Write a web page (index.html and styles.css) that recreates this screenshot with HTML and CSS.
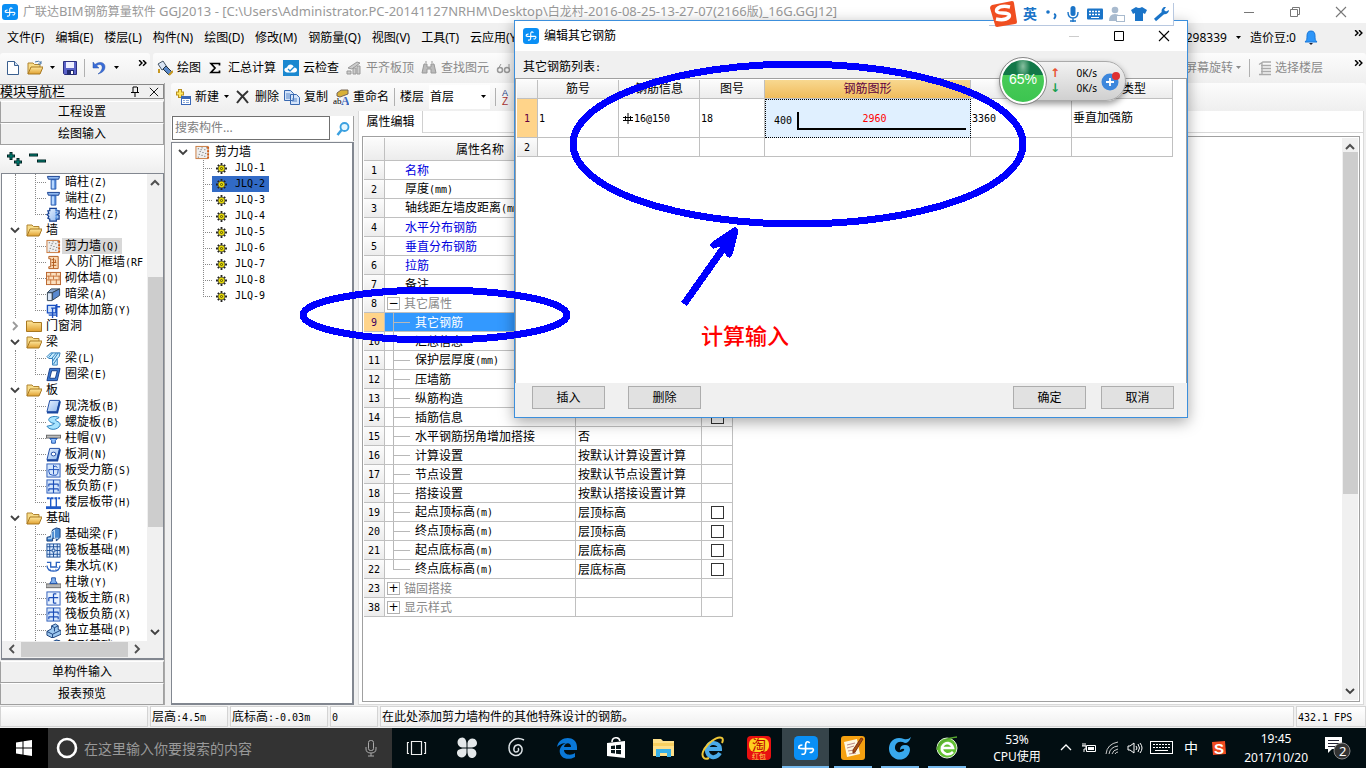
FILE: index.html
```html
<!DOCTYPE html>
<html lang="zh-CN">
<head>
<meta charset="utf-8">
<title>广联达BIM钢筋算量软件 GGJ2013</title>
<link rel="stylesheet" href="styles.css">
</head>
<body>
<svg class="defs" aria-hidden="true">
  <linearGradient id="gb" x1="0" y1="0" x2="1" y2="1"><stop offset="0" stop-color="#e8f2ff"/><stop offset="1" stop-color="#8fb8ee"/></linearGradient>
  <linearGradient id="gy" x1="0" y1="0" x2="0" y2="1"><stop offset="0" stop-color="#ffe9a0"/><stop offset="1" stop-color="#e0a030"/></linearGradient>
  <symbol id="app" viewBox="0 0 16 16"><rect width="16" height="16" rx="3" fill="#0a8ff5"/><path d="M10.500 4.600Q7.900 2.600 7.700 6v4.200q-.2 2.500-2.700 1.800M5.600 6Q3 6 3.200 8q1 .6 4.500.4h4.600q1.400.6-.2 2.300-.9.600-1.600 0" fill="none" stroke="#fff" stroke-width="1.100"/></symbol>
  <symbol id="col" viewBox="0 0 16 16"><path d="M1.500 1.500h13l-1 3h-11z" fill="#8fb8f0" stroke="#123c8c"/><path d="M5.500 5h5v10h-5z" fill="#b8d8ff" stroke="#1a4ea8"/><path d="M9 5h1v10H9z" fill="#2a68c8"/></symbol>
  <symbol id="gzz" viewBox="0 0 16 16"><path d="M4 4V1.500h7V4h3v3l-2 1 2 1v4h-3v2H4v-2l-2-1 1-2-2-2 2-1-1-3z" fill="url(#gb)" stroke="#153f90" stroke-width="1.300"/><path d="M11 2v12" stroke="#4f8ee0" stroke-width="2" stroke-dasharray="2 1"/></symbol>
  <symbol id="fo" viewBox="0 0 16 16"><path d="M1 14V3h5l1.500 1.500H13V7" fill="#f8dc88" stroke="#b08430"/><path d="M1 14 4 7h12l-3 7z" fill="url(#gy)" stroke="#a87820"/></symbol>
  <symbol id="fc" viewBox="0 0 16 16"><path d="M.5 13.500V3h5.500l1 1.500h8.500v9z" fill="url(#gy)" stroke="#a87820"/></symbol>
  <symbol id="wall" viewBox="0 0 16 16"><rect x="1" y="1.500" width="13" height="13" fill="#eee" stroke="#c8783c"/><path d="M14 2v12" stroke="#d05a14" stroke-width="2" stroke-dasharray="2 1.500"/><path d="M3 4h1M7 3h1M10 5h1M5 7h1M8 8h1M4 10h1M11 9h1M7 11h1M10 12h1M3 13h1M6 5h1M12 3h1" stroke="#555"/></symbol>
  <symbol id="door" viewBox="0 0 16 16"><path d="M3 1.500h10v13H3v-2h2V4H3z" fill="#fbd9b4" stroke="#b05a1c"/><path d="M6 5h3M8 3v11M6 8h5M6 11h5M10 5v3" stroke="#b05a1c"/></symbol>
  <symbol id="brick" viewBox="0 0 16 16"><rect x=".5" y="1.500" width="15" height="13" fill="#fbe0c0" stroke="#b8622a"/><path d="M1 5.500h14M1 9.500h14M5 2v3M11 2v3M8 5v4M14 5v4M3 5v4M5 9v5M11 9v5" stroke="#c8743c"/></symbol>
  <symbol id="beam" viewBox="0 0 16 16"><path d="M1.500 6h5v8.500h-5z" fill="#dce8f8" stroke="#345"/><path d="m1.500 6 4-4h9l-8 4z" fill="#89a8d0" stroke="#345"/><path d="m7 6 7.500-4v7L7 14z" fill="#5a8ad0" stroke="#345"/></symbol>
  <symbol id="rwall" viewBox="0 0 16 16"><rect x="2" y="2" width="10" height="11" fill="#cfe2fb"/><path d="M1.500 2.500h9v8h-9zM5.500 5.500h6v5M7 6v10M11.500 1v14M11 4h4M3 13h8" fill="none" stroke="#1a4fc0" stroke-width="1.400"/></symbol>
  <symbol id="liang" viewBox="0 0 16 16"><path d="m1 6 4-4h10l-1 4-2 2v7H7V8H3z" fill="#c6ecff" stroke="#2a7ab8"/><path d="m3 7 4-5m-1 6 5-6m-4 9 6-9M8 14l4-6" stroke="#2a7ab8"/></symbol>
  <symbol id="ring" viewBox="0 0 16 16"><path d="M4 1.500h11l-3 13H1z" fill="#3a78d0" stroke="#163c88"/><path d="M6 4h6l-2 8H4z" fill="#fff" stroke="#163c88"/></symbol>
  <symbol id="slab" viewBox="0 0 16 16"><path d="M4 1.500h10.500l-3 12H1z" fill="url(#gb)" stroke="#1a48a0"/><path d="M1 14.500h11l3-12" fill="none" stroke="#1a48a0" stroke-width="2"/></symbol>
  <symbol id="spiral" viewBox="0 0 16 16"><path d="M14 2.500C8 0 0 3 4 7q2 2 5 2-1 2-8 3c3 5 12 4 14-1 1-4-5-4-5-6 1-1 3-1 4-2.500z" fill="#a8e4ff" stroke="#1f78b8"/></symbol>
  <symbol id="cap" viewBox="0 0 16 16"><rect x=".5" y="4.500" width="15" height="3" fill="#bbb" stroke="#666"/><path d="M4 8h8l-2 2v3H6v-3z" fill="#8fc0ff" stroke="#1b50a8"/></symbol>
  <symbol id="hole" viewBox="0 0 16 16"><use href="#slab"/><ellipse cx="8" cy="7.500" rx="2.500" ry="2" fill="#fff" stroke="#1a48a0"/></symbol>
  <symbol id="rb1" viewBox="0 0 16 16"><rect x="1" y="1" width="14" height="14" fill="#d4e6fc" stroke="#2a5ab8"/><path d="M8 2v10M3 7h11M3 7v2q0 4 4 4h4q2-1 2-6M8 4q3-2 4 1" fill="none" stroke="#1b4eb8"/></symbol>
  <symbol id="rb2" viewBox="0 0 16 16"><rect x="1" y="1" width="14" height="14" fill="#d4e6fc" stroke="#2a5ab8"/><path d="M8 1v14M3 5.500h10M3 10.500h10M3 5v3M13 5v3M3 10v3M13 10v3" stroke="#1b4eb8" stroke-width="1.200"/></symbol>
  <symbol id="strip" viewBox="0 0 16 16"><path d="M1 3.500h14" stroke="#1f5ac8" stroke-width="2" stroke-dasharray="3 1"/><path d="M5 3v11M11 3v11" stroke="#1f5ac8" stroke-width="1.500"/><path d="M0 12h16v3H0z" fill="#1f5ac8"/></symbol>
  <symbol id="fbeam" viewBox="0 0 16 16"><path d="M1 15v-4l4-1 2-7 4-2 4 1v9l-4 4v-3H7v3z" fill="#4a8ad0" stroke="#143c78"/><path d="M2 12h4V6l3-3v9h4" fill="none" stroke="#d8ecff"/></symbol>
  <symbol id="raft" viewBox="0 0 16 16"><rect x="1" y="1" width="14" height="14" fill="#dcecff" stroke="#1a4e98"/><path d="M4 1v14M12 1v14M1 4h14M1 12h14M6.500 6.500h3v3h-3zM8 1v5M8 10v5M1 8h5M10 8h5" fill="none" stroke="#1a4e98"/></symbol>
  <symbol id="pit" viewBox="0 0 16 16"><path d="M1 3.500h4v5h6v-5h4M1 7c1 8 13 8 14 0" fill="none" stroke="#2a62c0" stroke-width="1.400"/><path d="M4 11h1M7 12h1M10 11h1M12 9h1" stroke="#2a62c0"/></symbol>
  <symbol id="pier" viewBox="0 0 16 16"><path d="M0 9.500h16v4H0z" fill="#b8b8b8" stroke="#666"/><path d="M6 3h4v3l2 3H4l2-3z" fill="#86b4f0" stroke="#1a4ea8"/></symbol>
  <symbol id="rt1" viewBox="0 0 16 16"><rect x="1" y="1" width="14" height="14" fill="#e8f2ff" stroke="#2a5ab8"/><path d="M8 3v10M3 7h10M3 7v4M8 3h3M8 13h3" fill="none" stroke="#1b4eb8" stroke-width="1.300"/></symbol>
  <symbol id="indep" viewBox="0 0 16 16"><path d="m1 9 5-3V3l4-2 3 2v4l3 1v4l-9 4-6-3z" fill="#9cc8f0" stroke="#153c78"/><path d="m1 9 6 3 8-4M7 12v4M6 3l3 2v4M9 5l4-2" fill="none" stroke="#153c78"/></symbol>
  <symbol id="gear" viewBox="0 0 12 12"><path d="M6 0v12M0 6h12M2 2l8 8M10 2l-8 8" stroke="#222" stroke-width="2"/><circle cx="6" cy="6" r="3.600" fill="#f2e400" stroke="#554" stroke-width=".8"/><circle cx="6" cy="6" r="1.200" fill="#f2e400" stroke="#222" stroke-width=".8"/></symbol>
  <symbol id="dn" viewBox="0 0 10 10"><path d="m1 3 4 4 4-4" fill="none" stroke="#404040" stroke-width="1.800"/></symbol>
  <symbol id="up" viewBox="0 0 10 10"><path d="m1 7 4-4 4 4" fill="none" stroke="#505050" stroke-width="2"/></symbol>
  <symbol id="rt" viewBox="0 0 10 10"><path d="m3 1 4 4-4 4" fill="none" stroke="currentColor" stroke-width="1.800"/></symbol>
  <symbol id="lt" viewBox="0 0 10 10"><path d="M7 1 3 5l4 4" fill="none" stroke="currentColor" stroke-width="1.800"/></symbol>
  <symbol id="tri" viewBox="0 0 7 4"><path d="M1 0h5L3.500 3z" fill="currentColor"/></symbol>
  <symbol id="more" viewBox="0 0 8 6"><path d="m1 0 2.500 2.500L1 5m3.500-5L7 2.500 4.500 5" fill="none" stroke="#000" stroke-width="1.300"/></symbol>
  <symbol id="x" viewBox="0 0 12 12"><path d="m1 1 10 10M11 1 1 11" stroke="currentColor" stroke-width="1.100"/></symbol>
</svg>

<div class="app">
  <header class="title">
    <svg class="i16"><use href="#app"/></svg>
    <h1>广联达<span>BIM</span>钢筋算量软件<span> GGJ2013 - [C:\Users\Administrator.PC-20141127NRHM\Desktop\</span>白龙村<span>-2016-08-25-13-27-07(2166</span>版<span>)_16G.GGJ12]</span></h1>
    <div class="winbtns">
      <button aria-label="最小化"><svg width="12" height="12"><path d="M1 6.500h10" stroke="#777"/></svg></button>
      <button aria-label="还原"><svg width="12" height="12"><path d="M1.500 3.500h7v7h-7zM3.500 3V1.500h7v7H9" fill="none" stroke="#777"/></svg></button>
      <button aria-label="关闭"><svg width="12" height="12"><use href="#x"/></svg></button>
    </div>
  </header>

  <nav class="menu">
    <a href="#">文件(F)</a><a href="#">编辑(E)</a><a href="#">楼层(L)</a><a href="#">构件(N)</a><a href="#">绘图(D)</a><a href="#">修改(M)</a><a href="#">钢筋量(Q)</a><a href="#">视图(V)</a><a href="#">工具(T)</a><a href="#">云应用(Y)</a>
    <div class="account"><span>13298339</span><svg class="tri"><use href="#tri"/></svg><span class="beans">造价豆:0</span>
      <svg width="14" height="16" viewBox="0 0 14 16"><path d="M7 1c3 0 4 2 4 5 0 3 0 4 2 6H1c2-2 2-3 2-6 0-3 1-5 4-5z" fill="#2e96f8" stroke="#1a78d8"/><path d="M5 13h4l-2 2z" fill="#223"/></svg>
      <svg class="more"><use href="#more"/></svg></div>
  </nav>

  <div class="bars">
    <div class="bar file">
      <button aria-label="新建"><svg class="i16"><path d="M2.500 1.500h7l4 4v9h-11z" fill="#fff" stroke="#3a5f8f"/><path d="M9.500 1.500v4h4" fill="#cfe0f4" stroke="#3a5f8f"/></svg></button>
      <button aria-label="打开"><svg class="i16"><use href="#fo"/><path d="M8 2q4-2 6 1m0-2v3h-3" fill="none" stroke="#4a78a8"/></svg></button>
      <svg class="tri"><use href="#tri"/></svg>
      <button aria-label="保存"><svg class="i16"><path d="M1.500 1.500h13v13h-12l-1-1z" fill="#5a62c8" stroke="#2c2f80"/><path d="M4 2h8v6H4z" fill="#eef"/><path d="M5 10h7v5H5z" fill="#222c70"/><path d="M9 11h2v3H9z" fill="#fff"/></svg></button>
      <i class="sep"></i>
      <button aria-label="撤销"><svg class="i16"><path d="M2 2v6h6L5.500 5.800C9 3 12 5 11 9q-1 3-4 5 7-2 7-7c0-5-6-6-10-2.500z" fill="#3a6cd8" stroke="#2450a8" stroke-width=".5"/></svg></button>
      <svg class="tri"><use href="#tri"/></svg>
      <svg class="more"><use href="#more"/></svg>
    </div>
    <div class="bar main">
      <button><svg class="i16"><path d="m1 4 5-3 4 6-5 3z" fill="#d8e4f4" stroke="#456"/><path d="m6 9 3-3 6 6-3 3z" fill="#5a88c8" stroke="#234"/><path d="M2 9v4M12 15l4-4" stroke="#c89820" stroke-width="2"/></svg>绘图</button>
      <button><svg class="i16" viewBox="0 -2 16 16"><path d="M11.500 3.500V1.500H3L7 6l-4 4.500h8.500v-2" fill="none" stroke="#000" stroke-width="1.700"/></svg>汇总计算</button>
      <button><svg class="i16"><rect width="16" height="16" fill="#1a88d0"/><path d="M4 12.500c-4-1-3-5 0-5 1-4 6-4 7 0 4 0 4 5 0 5z" fill="#fff"/><path d="m5 9 2 2 4-4" fill="none" stroke="#1a88d0" stroke-width="1.300"/></svg>云检查</button>
      <button class="off"><svg class="i16"><path d="m2 8 9-6 3 1-8 6zM1 11h4v3H1zM7 8h3v6H7zM11 6h3v8h-3z" fill="#ccc" stroke="#999"/></svg>平齐板顶</button>
      <button class="off"><svg class="i16"><path d="M3 4h3v3h4V4h3l2 9h-5V9H6v4H1zM4 2h2M10 2h2" fill="#bbb" stroke="#999"/></svg>查找图元</button>
      <button class="off" aria-label="查看"><svg class="i16"><circle cx="4" cy="10" r="2.500" fill="none" stroke="#999" stroke-width="1.500"/><circle cx="11" cy="10" r="2.500" fill="none" stroke="#999" stroke-width="1.500"/><path d="M2 9 5 4m8 5V4" stroke="#999"/></svg></button>
      <div class="right">
        <button class="off">屏幕旋转<svg class="tri"><use href="#tri"/></svg></button><i class="sep"></i>
        <button class="off"><svg class="i16"><path d="M2 4.500 6 2h8M4 5.500h10M4 8.500h10M4 11.500h10M2 14.500h12M5 3v11" fill="none" stroke="#aaa" stroke-width="1.300"/></svg>选择楼层</button>
        <svg class="more"><use href="#more"/></svg>
      </div>
    </div>
  </div>

  <div class="work">
    <aside class="side">
      <div class="sidehead"><span>模块导航栏</span>
        <svg width="10" height="11"><path d="M3 1v5M7.500 1v5M3 1h4M1 6.500h8M5 7v4" stroke="#000" fill="none"/></svg><svg width="10" height="10" viewBox="0 0 12 12"><use href="#x"/></svg></div>
      <button class="sect">工程设置</button>
      <button class="sect">绘图输入</button>
      <div class="expand"><svg width="17" height="15"><path d="M1 5h8M5 1v8M8 11h8M12 7v8" stroke="#022" stroke-width="3"/><path d="M2 5h6M5 2v6M9 11h6M12 8v6" stroke="#009080"/></svg><svg width="17" height="15"><path d="M0 4h9M8 10h9" stroke="#022" stroke-width="3"/><path d="M1 4h7M9 10h7" stroke="#009080"/></svg></div>
      <div class="treebox">
        <div class="treeview">
          <ul class="tree">
            <li><ul class="kids">
              <li class="leaf"><svg class="i15"><use href="#col"/></svg><span>暗柱<b>(Z)</b></span></li>
              <li class="leaf"><svg class="i15"><use href="#col"/></svg><span>端柱<b>(Z)</b></span></li>
              <li class="leaf"><svg class="i15"><use href="#gzz"/></svg><span>构造柱<b>(Z)</b></span></li></ul></li>
            <li><div class="branch"><svg class="chev"><use href="#dn"/></svg><svg class="i16"><use href="#fo"/></svg>墙</div><ul class="kids">
              <li class="leaf sel"><svg class="i15"><use href="#wall"/></svg><span>剪力墙<b>(Q)</b></span></li>
              <li class="leaf"><svg class="i15"><use href="#door"/></svg><span>人防门框墙<b>(RF</b></span></li>
              <li class="leaf"><svg class="i15"><use href="#brick"/></svg><span>砌体墙<b>(Q)</b></span></li>
              <li class="leaf"><svg class="i15"><use href="#beam"/></svg><span>暗梁<b>(A)</b></span></li>
              <li class="leaf"><svg class="i15"><use href="#rwall"/></svg><span>砌体加筋<b>(Y)</b></span></li></ul></li>
            <li><div class="branch shut"><svg class="chev"><use href="#rt"/></svg><svg class="i16"><use href="#fc"/></svg>门窗洞</div></li>
            <li><div class="branch"><svg class="chev"><use href="#dn"/></svg><svg class="i16"><use href="#fo"/></svg>梁</div><ul class="kids">
              <li class="leaf"><svg class="i15"><use href="#liang"/></svg><span>梁<b>(L)</b></span></li>
              <li class="leaf"><svg class="i15"><use href="#ring"/></svg><span>圈梁<b>(E)</b></span></li></ul></li>
            <li><div class="branch"><svg class="chev"><use href="#dn"/></svg><svg class="i16"><use href="#fo"/></svg>板</div><ul class="kids">
              <li class="leaf"><svg class="i15"><use href="#slab"/></svg><span>现浇板<b>(B)</b></span></li>
              <li class="leaf"><svg class="i15"><use href="#spiral"/></svg><span>螺旋板<b>(B)</b></span></li>
              <li class="leaf"><svg class="i15"><use href="#cap"/></svg><span>柱帽<b>(V)</b></span></li>
              <li class="leaf"><svg class="i15"><use href="#hole"/></svg><span>板洞<b>(N)</b></span></li>
              <li class="leaf"><svg class="i15"><use href="#rb1"/></svg><span>板受力筋<b>(S)</b></span></li>
              <li class="leaf"><svg class="i15"><use href="#rb2"/></svg><span>板负筋<b>(F)</b></span></li>
              <li class="leaf"><svg class="i15"><use href="#strip"/></svg><span>楼层板带<b>(H)</b></span></li></ul></li>
            <li><div class="branch"><svg class="chev"><use href="#dn"/></svg><svg class="i16"><use href="#fo"/></svg>基础</div><ul class="kids">
              <li class="leaf"><svg class="i15"><use href="#fbeam"/></svg><span>基础梁<b>(F)</b></span></li>
              <li class="leaf"><svg class="i15"><use href="#raft"/></svg><span>筏板基础<b>(M)</b></span></li>
              <li class="leaf"><svg class="i15"><use href="#pit"/></svg><span>集水坑<b>(K)</b></span></li>
              <li class="leaf"><svg class="i15"><use href="#pier"/></svg><span>柱墩<b>(Y)</b></span></li>
              <li class="leaf"><svg class="i15"><use href="#rt1"/></svg><span>筏板主筋<b>(R)</b></span></li>
              <li class="leaf"><svg class="i15"><use href="#rb2"/></svg><span>筏板负筋<b>(X)</b></span></li>
              <li class="leaf"><svg class="i15"><use href="#indep"/></svg><span>独立基础<b>(P)</b></span></li>
              <li class="leaf"><svg class="i15"><use href="#fbeam"/></svg><span>条形基础<b>(T)</b></span></li>
              <li class="leaf"></li></ul></li>
          </ul>
          <div class="vsb"><svg><use href="#up"/></svg><div class="vtrack"><i class="navthumb"></i></div><svg><use href="#dn"/></svg></div>
        </div>
        <div class="hsb"><svg><use href="#lt"/></svg><i></i><svg><use href="#rt"/></svg></div>
      </div>
      <button class="sect">单构件输入</button>
      <button class="sect">报表预览</button>
    </aside>

    <main class="center">
      <div class="bar tools">
        <button><svg class="i16"><path d="M5 0v9M1 4.500h8" stroke="#b89020" stroke-width="4"/><path d="M5 1v7M2 4.500h6" stroke="#ffe860" stroke-width="2"/><rect x="6.500" y="7.500" width="9" height="8" fill="#fff" stroke="#3a68b8"/><path d="M6 9h10" stroke="#3a68b8" stroke-width="2"/><path d="M8 11.500h2m1 0h3m-6 2h2m1 0h3" stroke="#88a8d8"/></svg>新建<svg class="tri"><use href="#tri"/></svg></button>
        <button><svg class="i16"><path d="M2 2q6 5 11 12M13 2Q7 7 2 14" fill="none" stroke="#333" stroke-width="2"/></svg>删除</button>
        <button><svg class="i16"><path d="M.5 1.500h6l3 3v7h-9zM6.500 5.500h6l3 3v7h-9z" fill="#d4e4fa" stroke="#3868b0"/><path d="M2 5h4M2 7h4M2 9h4M8 10h5M8 12h5" stroke="#5a88c8"/></svg>复制</button>
        <button><svg class="i16"><path d="m4 4 4-3h7v4l-8 3-3-1z" fill="#d8b038" stroke="#765"/><text x="0" y="15" font-size="9" font-family="Liberation Serif">ab</text><text x="8" y="16" font-size="12" font-weight="bold" fill="#3a68c0" font-family="Liberation Serif">A</text></svg>重命名</button>
        <i class="sep"></i>
        <label for="floor">楼层</label>
        <div class="combo"><select id="floor"><option>首层</option></select><svg class="tri"><use href="#tri"/></svg></div>
        <i class="sep"></i>
        <svg width="10" height="18"><text x="1" y="8" font-size="9" fill="#248" font-family="Liberation Sans">A</text><text x="1" y="17" font-size="10" fill="#a33" font-family="Liberation Sans">Z</text></svg>
      </div>
      <div class="panes">
        <section class="comps">
          <div class="search"><input type="text" placeholder="搜索构件..." aria-label="搜索构件"><button aria-label="搜索"><svg class="i16"><circle cx="9.500" cy="6" r="4" fill="#e4f6ff" stroke="#3aa0e0" stroke-width="1.800"/><path d="m6.500 9-4 5" stroke="#3aa0e0" stroke-width="2.500"/></svg></button></div>
          <div class="complist">
            <div class="root"><svg class="chev"><use href="#dn"/></svg><svg class="i15"><use href="#wall"/></svg>剪力墙</div>
            <ul>
              <li><span><svg class="i11"><use href="#gear"/></svg><b>JLQ-1</b></span></li>
              <li class="on"><span><svg class="i11"><use href="#gear"/></svg><b>JLQ-2</b></span></li>
              <li><span><svg class="i11"><use href="#gear"/></svg><b>JLQ-3</b></span></li>
              <li><span><svg class="i11"><use href="#gear"/></svg><b>JLQ-4</b></span></li>
              <li><span><svg class="i11"><use href="#gear"/></svg><b>JLQ-5</b></span></li>
              <li><span><svg class="i11"><use href="#gear"/></svg><b>JLQ-6</b></span></li>
              <li><span><svg class="i11"><use href="#gear"/></svg><b>JLQ-7</b></span></li>
              <li><span><svg class="i11"><use href="#gear"/></svg><b>JLQ-8</b></span></li>
              <li><span><svg class="i11"><use href="#gear"/></svg><b>JLQ-9</b></span></li>
            </ul>
          </div>
        </section>
        <section class="props">
          <div class="tabs"><button>属性编辑</button></div>
          <div class="propbox">
            <div class="propscroll">
            <table class="ptable">
              <thead><tr><th></th><th class="name">属性名称</th><th class="val">属性值</th><th class="add">附加</th></tr></thead>
              <tbody>
              <tr><th>1</th><td class="top key">名称</td><td></td><td></td></tr>
              <tr><th>2</th><td class="top">厚度<b>(mm)</b></td><td></td><td></td></tr>
              <tr><th>3</th><td class="top">轴线距左墙皮距离<b>(mm)</b></td><td></td><td></td></tr>
              <tr><th>4</th><td class="top key">水平分布钢筋</td><td></td><td></td></tr>
              <tr><th>5</th><td class="top key">垂直分布钢筋</td><td></td><td></td></tr>
              <tr><th>6</th><td class="top key">拉筋</td><td></td><td></td></tr>
              <tr><th>7</th><td class="top">备注</td><td></td><td></td></tr>
              <tr><th>8</th><td class="grp"><i>−</i>其它属性</td><td></td><td></td></tr>
              <tr class="cur"><th>9</th><td class="sub">其它钢筋</td><td></td><td></td></tr>
              <tr><th>10</th><td class="sub">汇总信息</td><td></td><td></td></tr>
              <tr><th>11</th><td class="sub">保护层厚度<b>(mm)</b></td><td></td><td></td></tr>
              <tr><th>12</th><td class="sub">压墙筋</td><td></td><td></td></tr>
              <tr><th>13</th><td class="sub">纵筋构造</td><td></td><td></td></tr>
              <tr><th>14</th><td class="sub">插筋信息</td><td></td><td><input type="checkbox" aria-label="插筋信息"></td></tr>
              <tr><th>15</th><td class="sub">水平钢筋拐角增加搭接</td><td>否</td><td></td></tr>
              <tr><th>16</th><td class="sub">计算设置</td><td>按默认计算设置计算</td><td></td></tr>
              <tr><th>17</th><td class="sub">节点设置</td><td>按默认节点设置计算</td><td></td></tr>
              <tr><th>18</th><td class="sub">搭接设置</td><td>按默认搭接设置计算</td><td></td></tr>
              <tr><th>19</th><td class="sub">起点顶标高<b>(m)</b></td><td>层顶标高</td><td><input type="checkbox" aria-label="起点顶标高"></td></tr>
              <tr><th>20</th><td class="sub">终点顶标高<b>(m)</b></td><td>层顶标高</td><td><input type="checkbox" aria-label="终点顶标高"></td></tr>
              <tr><th>21</th><td class="sub">起点底标高<b>(m)</b></td><td>层底标高</td><td><input type="checkbox" aria-label="起点底标高"></td></tr>
              <tr><th>22</th><td class="sub end">终点底标高<b>(m)</b></td><td>层底标高</td><td><input type="checkbox" aria-label="终点底标高"></td></tr>
              <tr><th>23</th><td class="grp"><i>+</i>锚固搭接</td><td></td><td></td></tr>
              <tr><th>38</th><td class="grp"><i>+</i>显示样式</td><td></td><td></td></tr>
              </tbody>
            </table>
            </div>
            <div class="vsb"><svg><use href="#up"/></svg><div class="vtrack"><i class="propthumb"></i></div><svg><use href="#dn"/></svg></div>
          </div>
        </section>
      </div>
    </main>
  </div>

  <footer class="status">
    <span class="s1"></span><span class="s2">层高<b>:4.5m</b></span><span class="s3">底标高<b>:-0.03m</b></span><span class="s4"><b>0</b></span><span class="s5">在此处添加剪力墙构件的其他特殊设计的钢筋。</span><span class="s6"><b>432.1 FPS</b></span>
  </footer>

  <div class="taskbar">
    <button class="start" aria-label="开始"><svg width="18" height="18"><path d="M1 3.500 7.500 2.500v6H1zM8.500 2.300 17 1v7.500H8.500zM1 9.500h6.500v6L1 14.500zM8.500 9.500H17V17l-8.500-1.300z" fill="#fff"/></svg></button>
    <div class="cortana"><svg width="22" height="22"><circle cx="11" cy="11" r="9" fill="none" stroke="#fff" stroke-width="2.600"/></svg><input type="text" placeholder="在这里输入你要搜索的内容" aria-label="搜索"><svg width="14" height="18"><rect x="4.500" y="1.500" width="5" height="10" rx="2" fill="none" stroke="#aaa"/><path d="M2 8v2q0 4 5 4t5-4V8M7 14v3M4 17h6" fill="none" stroke="#aaa"/></svg></div>
    <div class="apps">
      <button class="w50" aria-label="任务视图"><svg class="i24"><path d="M6.500 5.500h10v13h-10zM4 6.500H2.500v11H4M19 6.500h1.500v11H19" fill="none" stroke="#eee" stroke-width="1.200"/></svg></button>
      <button class="w50" aria-label="风扇"><svg class="i24"><g fill="#e4e8ea"><path d="M11.500 11.500H7C2 11 1 4 5 2c5-2 7 2 6.500 9.500zM12.500 11.500V7c.5-5 7-6 9-2 2 5-2 7-9 6.500zM12.500 12.500H17c5 .5 6 7 2 9-5 2-7-2-6.500-9zM11.500 12.500V17c-.5 5-7 6-9 2-2-5 2-7 9-6.500z"/></g></svg></button>
      <button class="w50" aria-label="浏览器"><svg class="i24"><path d="M19 4C11 0 4 5 4 12s8 10 12 5c3-5-1-9-4-8-4 1-4 7-1 7 3 0 3-3 2-4" fill="none" stroke="#dde3e6" stroke-width="1.500"/></svg></button>
      <button class="w50" aria-label="Edge"><svg class="i24"><path d="M2 11C4-1 22-1 22 11v3H9c0 5 7 6 11 3v4C11 26 3 20 5 13c1-3 3-5 6-6-5 0-8 3-9 4zm7 0h7c0-5-6-5-7 0z" fill="#0a78d8"/></svg></button>
      <button class="w48" aria-label="应用商店"><svg class="i24"><path d="M3 7 21 5v17L3 20z" fill="#fff"/><path d="M8 6c0-5 7-6 8-1" fill="none" stroke="#fff" stroke-width="1.600"/><path d="m7 10 4-.5V13H7zM12 9.300l5-.6V13h-5zM7 14h4v3.500L7 17zM12 14h5v4.300l-5-.6z" fill="#08161a"/></svg></button>
      <button class="w48" aria-label="文件资源管理器"><svg class="i24"><path d="M1 3h8l2 2h11v15H1z" fill="#ffe08a"/><path d="M1 7h21v3H1z" fill="#f8cf60"/><path d="M4 21v-8h15v8h-4v-4H8v4z" fill="#38b0e8"/></svg></button>
      <button class="w48" aria-label="Internet Explorer"><svg class="i24"><path d="M20 17q-3 5-8 4-6-2-5-9 2-6 7-5 6 1 6 6H8" fill="none" stroke="#4aaae8" stroke-width="4"/><path d="M4 22C-3 16 16-2 22 2c1 1 1 3 0 5M4 22c1 1 3 1 5 0" fill="none" stroke="#f0c838" stroke-width="2"/></svg></button>
      <button class="w46" aria-label="淘宝"><svg class="i24"><rect width="24" height="24" rx="4" fill="#e81010"/><rect x="2" y="2" width="20" height="14" rx="6" fill="#ffcf20"/><text x="5" y="14" font-size="14" fill="#b00">淘</text><text x="5" y="23" font-size="7" fill="#ffd850">红包</text></svg></button>
      <button class="w47 active" aria-label="GGJ2013"><svg class="i24"><use href="#app"/></svg></button>
      <button class="w47 open" aria-label="记事"><svg class="i24"><rect width="24" height="24" rx="3" fill="#f5a010"/><path d="m3 6 13-3 3 15-13 3z" fill="#fff8e0"/><path d="m6 9 8-2M6 12l7-2M7 15l6-1M8 18l7-1" stroke="#b88"/><path d="m12 14 8-12 2 1-8 13-2 1z" fill="#a85010" stroke="#7a3010"/></svg></button>
      <button class="w47 open" aria-label="GBQ"><svg class="i24"><path d="M23 1q-2 6-6 6-6-3-9 1c-3 5 1 9 5 8q4-1 3-3-1-1-4 1 0-5 5-5 5 0 5 5c-1 8-8 11-14 9C1 20-1 12 3 6c3-4 8-5 13-3q4 1 7-2z" fill="#38a8ec"/></svg></button>
      <button class="w47 open" aria-label="360浏览器"><svg class="i24"><circle cx="12" cy="12" r="10" fill="#62c032" stroke="#e0f0d8"/><path d="M18 16q-3 3-7 2-5-2-4-7 2-4 6-4 4 1 5 5H8" fill="none" stroke="#fff" stroke-width="2.600"/><path d="M2 14Q4 3 22 1" fill="none" stroke="#58a830" stroke-width="1.500"/></svg></button>
    </div>
    <div class="cpu">53%<br>CPU使用</div>
    <div class="tray">
      <svg class="i16"><path d="m3 10 5-5 5 5" fill="none" stroke="#fff" stroke-width="1.300"/></svg>
      <svg class="i16"><path d="M5.500 5.500h9v6h-9zM2 3v3M4 3v3M1 6h4v3H3v3" fill="none" stroke="#fff"/><path d="M7 7h6v3H7z" fill="#fff"/></svg>
      <svg class="i16"><path d="M2 14Q3 4 14 2M5 14q1-7 9-8M8 14q1-4 6-5M11 14q1-2 3-2" fill="none" stroke="#ccc"/></svg>
      <svg class="i16"><path d="M1 6h2l4-3v10l-4-3H1zM9 6q2 2 0 4M11 4q3 4 0 8M13 3q4 5 0 10" fill="none" stroke="#fff"/></svg>
      <svg width="24" height="14"><rect x=".5" y=".5" width="22" height="12" fill="none" stroke="#fff"/><path d="M3 3.500h18M3 6.500h18" stroke="#fff" stroke-dasharray="2 1"/><path d="M5 9.500h13" stroke="#fff"/></svg>
      <span class="ime">中</span>
      <svg class="i16"><path d="m1 2 13-1 1 13-13 1z" fill="#f04a20"/><text x="3" y="14" font-size="15" font-weight="bold" fill="#fff" font-family="Liberation Sans">S</text></svg>
    </div>
    <div class="clock">19:45<br>2017/10/20</div>
    <button class="notes" aria-label="通知"><svg width="30" height="28"><path d="M3 3h17v12H10l-4 4v-4H3z" fill="#fff"/><path d="M6 6.500h11M6 9.500h11M6 12.500h8" stroke="#223"/><circle cx="20" cy="17" r="8" fill="#333" stroke="#888"/><text x="17" y="22" font-size="13" fill="#fff" font-family="Noto Sans">2</text></svg></button>
  </div>
</div>

<div class="dialog" role="dialog" aria-label="编辑其它钢筋">
  <div class="dtitle"><svg class="i16"><use href="#app"/></svg><span>编辑其它钢筋</span>
    <div class="dwin"><button aria-label="最小化"><svg width="12" height="12"><path d="M1 6.500h10" stroke="#ccc"/></svg></button><button aria-label="最大化"><svg width="12" height="12"><path d="M1.500 1.500h9v9h-9z" fill="none" stroke="#000"/></svg></button><button aria-label="关闭"><svg width="12" height="12"><use href="#x"/></svg></button></div></div>
  <div class="dlabel">其它钢筋列表<b>:</b></div>
  <div class="dlist">
    <table class="dtable">
      <thead><tr><th class="c0"></th><th class="c1">筋号</th><th class="c1">钢筋信息</th><th class="c2">图号</th><th class="c3 hot">钢筋图形</th><th class="c4">长度</th><th class="c4">钢筋类型</th></tr></thead>
      <tbody>
        <tr class="r1"><th class="hotnum"><b>1</b></th><td><b>1</b></td><td><svg width="10" height="11"><path d="M0 4.500h10M0 7.500h10M2.500 3v5M7.500 3v5M5 0v11" stroke="#000" fill="none"/></svg><b>16@150</b></td><td><b>18</b></td>
          <td class="shape"><div><b>400</b><span><b>2960</b></span></div></td><td><b>3360</b></td><td>垂直加强筋</td></tr>
        <tr><th><b>2</b></th><td></td><td></td><td></td><td></td><td></td><td></td></tr>
      </tbody>
    </table>
  </div>
  <div class="dfoot"><button>插入</button><button>删除</button><button class="push">确定</button><button>取消</button></div>
</div>

<div class="sogou">
  <svg width="28" height="28"><path d="M3 5 23 1q2 0 2 2l3 19q0 2-2 2L8 27q-2 0-2-2L1 8q0-2 2-3z" fill="#f04e20"/><path d="M21 7Q12 5 8 9q-2 4 5 4 9 0 7 4-4 4-13 2" fill="none" stroke="#fff" stroke-width="3.500"/></svg>
  <strong>英</strong>
  <svg class="i16"><circle cx="5" cy="6" r="1.800" fill="#1a74c8"/><path d="M11 8q3 1 0 5" stroke="#1a74c8" stroke-width="2" fill="none"/></svg>
  <svg class="i16"><rect x="5.500" y="0" width="5" height="10" rx="2.500" fill="#1a74c8"/><path d="M3 6q0 6 5 6t5-6M8 12v4M5 15h6" fill="none" stroke="#1a74c8" stroke-width="1.400"/></svg>
  <svg class="i16"><rect y="2.500" width="16" height="11" rx="1" fill="#1a74c8"/><path d="M2 5.500h12M2 8.500h12" stroke="#fff" stroke-width="1.500" stroke-dasharray="2 1"/><path d="M4 11.500h8" stroke="#fff"/></svg>
  <svg class="i16"><circle cx="6" cy="4" r="3.300" fill="#a8bace"/><path d="M0 15q0-7 6-7t6 7z" fill="#a8bace"/><rect x="7.500" y="9.500" width="8" height="6" fill="#fff" stroke="#a8bace"/></svg>
  <svg class="i16"><path d="M5 1q3 2 6 0l5 3-2 4-2-1v8H4V7L2 8 0 4z" fill="#1a74c8"/></svg>
  <svg class="i16"><path d="M2 14 10 7" stroke="#1a74c8" stroke-width="3"/><path d="M11 1c-3 2-3 5-1 7 3 1 6-1 6-4l-3 1.500L11 4l2-3z" fill="#1a74c8"/></svg>
</div>

<div class="net">
  <div class="ball"><span>65%</span></div>
  <div class="rates"><p><em class="u">↑</em>0K/s</p><p><em class="d">↓</em>0K/s</p></div>
  <svg width="20" height="22"><circle cx="9" cy="12" r="8.500" fill="#3d87dc"/><path d="M9 8v8M5 12h8" stroke="#fff" stroke-width="1.800"/><circle cx="15" cy="6" r="4" fill="#e03030"/></svg>
</div>

<svg class="marks" width="1366" height="768" viewBox="0 0 1366 768" aria-hidden="true">
  <g fill="none" stroke="#0000fe" stroke-width="7" shape-rendering="crispEdges">
    <ellipse cx="798" cy="144" rx="225" ry="80"/>
    <ellipse cx="435" cy="315" rx="132" ry="25"/>
    <path d="m684 304 48-68"/>
    <path d="m714 245 21-14-6 23-2-14z" stroke-linejoin="round" fill="#0000fe"/>
  </g>
</svg>
<p class="remark">计算输入</p>
</body>
</html>
```
FILE: styles.css
```css
* { box-sizing: border-box; }
body { margin: 0; background: #f0f0f0; color: #000; font: 12px/16px "Noto Sans", "Noto Sans CJK SC", sans-serif; overflow: hidden; }
button { border: 0; padding: 0; background: none; font: inherit; color: inherit; display: flex; align-items: center; }
ul, p, h1 { margin: 0; padding: 0; list-style: none; }
b { font: 10px/14px "DejaVu Sans Mono", monospace; }
svg { flex: none; display: block; }
.defs { position: absolute; width: 0; height: 0; }
.i24 { width: 24px; height: 24px; }
.i16 { width: 16px; height: 16px; }
.i15 { width: 15px; height: 15px; }
.i11 { width: 11px; height: 11px; }
.tri { width: 7px; height: 4px; }
.more { width: 9px; height: 7px; }
.sep { width: 1px; height: 18px; background: #b0b0b0; flex: none; }

.app { min-height: 100vh; height: 100vh; display: flex; flex-direction: column; }
.title { height: 23px; background: #fff; display: flex; align-items: center; padding-left: 2px; gap: 5px; flex: none; }
.title h1 { font-size: 12px; font-weight: 400; color: #999; white-space: nowrap; }
.title span { font-size: 13px; }
.winbtns { margin-left: auto; display: flex; gap: 34px; padding-right: 19px; color: #777; }

.menu { height: 30px; display: flex; align-items: center; padding-left: 7px; gap: 11px; flex: none; white-space: nowrap; }
.menu a { color: #000; text-decoration: none; }
.account { margin-left: auto; display: flex; align-items: center; gap: 8px; padding-right: 3px; }
.account .more { margin: 0 0 10px 28px; }

.bars { display: flex; height: 30px; gap: 3px; flex: none; }
.bar { display: flex; align-items: center; background: linear-gradient(#fcfcfc, #efefef); border-radius: 3px; white-space: nowrap; }
.bar button { gap: 4px; }
.file { width: 150px; padding: 0 3px 0 5px; gap: 6px; }
.file .more { margin: 0 0 10px auto; }
.main { flex: 1; padding: 0 3px 0 4px; gap: 7px; }
.off { color: #8a8a8a; }
.right { margin-left: auto; display: flex; align-items: center; gap: 7px; }
.right .more { margin: 0 0 10px 24px; }
.right button { gap: 2px; }

.work { flex: 1; min-height: 0; display: flex; gap: 6px; }
.side { width: 165px; display: flex; flex-direction: column; border-right: 1px solid #a8a8a8; }
.sidehead { height: 15px; margin: 1px 0 2px; border: 1px solid #888; border-left: 0; display: flex; align-items: center; gap: 9px; padding-right: 4px; line-height: 13px; flex: none; }
.sidehead span { flex: 1; font-size: 13px; white-space: nowrap; }
.sect { height: 22px; justify-content: center; border: 1px solid #a0a0a0; border-top-color: #fff; background: #f0f0f0; flex: none; }
.expand { height: 28px; display: flex; gap: 6px; padding: 6px; background: linear-gradient(#fff, #eee); flex: none; }
.treebox { flex: 1; min-height: 0; margin: 0 0 1px 1px; border: 2px solid #828790; border-width: 1px 1px 2px; background: #fff; display: flex; flex-direction: column; }
.treeview { flex: 1; min-height: 0; display: flex; }
.tree { flex: 1; min-width: 0; overflow: hidden; padding-left: 8px; }
.tree li { white-space: nowrap; }
.branch { height: 16px; display: flex; align-items: center; }
.branch .i16 { margin: 0 4px 0 6px; }
.shut .chev { color: #999; }
.chev { width: 10px; height: 10px; }
.kids { margin-left: 5px; padding-left: 19px; border-left: 1px dotted #888; }
.leaf { height: 16px; display: flex; align-items: center; background: repeating-linear-gradient(#888 0 1px, transparent 1px 2px) no-repeat 0 0 / 1px 100%; }
.leaf:last-child { background-size: 1px 8px; }
.leaf::before { content: ""; width: 11px; border-top: 1px dotted #888; flex: none; }
.leaf span { padding: 0 3px; margin-left: 1px; }
.sel span { background: #d8d8d8; }
.vsb { width: 16px; background: #f0f0f0; display: flex; flex-direction: column; align-items: center; padding: 4px 0; flex: none; }
.vsb svg { width: 10px; height: 10px; }
.vtrack { flex: 1; width: 15px; display: flex; flex-direction: column; }
.vtrack i { background: #cdcdcd; }
.navthumb { height: 57%; margin-top: 89px; }
.propthumb { height: 64%; }
.hsb { height: 17px; background: #f0f0f0; display: flex; align-items: center; gap: 4px; padding: 0 21px 1px 5px; color: #505050; flex: none; }
.hsb svg { width: 10px; height: 10px; }
.hsb i { flex: 1; height: 15px; background: #cdcdcd; }

.center { flex: 1; min-width: 0; display: flex; flex-direction: column; }
.tools { height: 28px; padding-left: 4px; gap: 5px; flex: none; }
.combo { width: 61px; height: 24px; background: #fff; display: flex; align-items: center; padding-right: 3px; }
.combo select { appearance: none; border: 0; background: none; font: inherit; flex: 1; min-width: 0; padding: 0 1px; }
.panes { flex: 1; min-height: 0; display: flex; gap: 4px; }
.comps { width: 183px; display: flex; flex-direction: column; padding-top: 5px; }
.search { display: flex; height: 25px; gap: 5px; margin-bottom: 1px; background: #fff; border-right: 1px solid #a0a0a0; }
.search input { width: 158px; border: 1px solid #707070; padding: 0 2px; font: inherit; background: #fff; margin: 0 0 1px 1px; }
.search input::placeholder { color: #808080; }
.complist { flex: 1; background: #fff; border: 1px solid #828790; border-right-width: 2px; border-bottom-width: 2px; padding: 1px 0 0 6px; }
.root { height: 16px; display: flex; align-items: center; }
.root .i15 { margin: 0 5px 0 7px; }
.complist ul { margin-left: 25px; }
.complist li { height: 16px; display: flex; align-items: center; background: repeating-linear-gradient(#888 0 1px, transparent 1px 2px) no-repeat 0 0 / 1px 100%; }
.complist li:last-child { background-size: 1px 8px; }
.complist li::before { content: ""; width: 9px; border-top: 1px dotted #888; }
.complist span { height: 16px; display: flex; align-items: center; gap: 8px; padding: 0 4px; }
.on span { background: #316ac5; }

.props { flex: 1; min-width: 0; display: flex; flex-direction: column; background: #fff; margin-right: 2px; border: 1px solid #dadada; border-width: 0 1px 1px; }
.tabs { height: 22px; background: #f0f0f0; display: flex; flex: none; }
.tabs button { width: 64px; background: #fff; justify-content: center; border-right: 1px solid #d0d0d0; }
.tabs::after { content: ""; flex: 1; background: #fff; border-bottom: 1px solid #d8d8d8; }
.propbox { flex: 1; min-height: 0; margin: 3px 3px 2px; border: 1px solid #a0a0a0; display: flex; padding: 1px; }
.propscroll { flex: 1; overflow: hidden; }
.ptable { width: 369px; table-layout: fixed; border-collapse: separate; border-spacing: 0; line-height: 15px; }
.ptable th, .ptable td { height: 19px; padding: 0; border: solid #c0c0c0; border-width: 0 1px 1px 0; white-space: nowrap; overflow: hidden; }
.ptable thead th { height: 23px; }
.ptable th { background: linear-gradient(#fcfcfc, #ececec); font-weight: 400; }
.ptable th:first-child { width: 21px; }
.ptable tbody th { font: 10px/15px "DejaVu Sans Mono", monospace; }
.ptable .name { width: 191px; }
.ptable .val { width: 126px; }
.ptable td:nth-child(3) { padding-left: 2px; }
.ptable .top { padding-left: 20px; }
.key { color: #0000e0; }
.ptable .grp { color: #888; }
.grp i { float: left; width: 13px; height: 13px; margin: 1px 4px 0 2px; border: 1px solid #b0b0b0; font: 12px/11px "DejaVu Sans", sans-serif; text-align: center; color: #000; }
.ptable .sub { padding-left: 30px; background: linear-gradient(#b8b8b8, #b8b8b8) no-repeat 8px 0 / 1px 100%, linear-gradient(#b8b8b8, #b8b8b8) no-repeat 8px 9px / 17px 1px; }
.ptable .end { background-size: 1px 9px, 17px 1px; }
.cur .sub { background-color: #3399ff; color: #fff; }
.ptable .cur th { background: #ffd48a; color: #400060; }
input[type=checkbox] { appearance: none; display: block; width: 13px; height: 13px; border: 1px solid #333; background: #fff; margin: 0 auto; }

.status { height: 22px; display: flex; gap: 2px; padding-bottom: 1px; background: #f0f0f0; flex: none; margin-top: 1px; }
.status span { border: 1px solid #d4d4d4; background: linear-gradient(#fff, #f0f0f0); padding: 0 1px; line-height: 20px; white-space: nowrap; }
.s1 { width: 148px; } .s2 { width: 78px; } .s3 { width: 98px; } .s4 { width: 48px; } .s5 { flex: 1; } .s6 { width: 70px; }

.taskbar { height: 40px; background: #020e12; color: #fff; display: flex; align-items: center; flex: none; }
.start { width: 48px; height: 40px; justify-content: center; background: #000; }
.cortana { width: 344px; height: 40px; background: #333; display: flex; align-items: center; padding: 0 14px 0 8px; gap: 4px; }
.cortana input { flex: 1; border: 0; background: none; font: 14px "Noto Sans CJK SC", sans-serif; color: #fff; padding: 0 2px; }
.cortana input::placeholder { color: #999; }
.apps { display: flex; }
.apps button { height: 40px; justify-content: center; }
.w50 { width: 50px; } .w48 { width: 48px; } .w47 { width: 47px; } .w46 { width: 46px; }
.active { background: #36444a; box-shadow: inset 0 -2px #76b9ed; }
.open { background: linear-gradient(#76b9ed, #76b9ed) no-repeat 50% 100% / 38px 2px; }
.cpu { width: 70px; margin-left: 12px; text-align: center; line-height: 17px; }
.tray { display: flex; align-items: center; gap: 7px; margin-left: 6px; }
.ime { font-size: 14px; margin: 0 6px 0 3px; }
.clock { margin-left: auto; text-align: center; line-height: 19px; }
.notes { margin: 0 14px 0 14px; }

.dialog { position: absolute; left: 514px; top: 20px; width: 674px; height: 398px; background: #f0f0f0; border: 1px solid #3c8fdc; box-shadow: 0 4px 14px rgba(0,0,0,.35); display: flex; flex-direction: column; }
.dtitle { height: 30px; background: #fff; display: flex; align-items: center; padding: 0 17px 0 8px; gap: 5px; }
.dwin { margin-left: auto; display: flex; gap: 33px; }
.dlabel { height: 27px; padding: 8px 8px 0; line-height: 16px; }
.dlist { flex: 1; background: #fff; border: 1px solid #a0a0a0; border-width: 1px 1px 0; padding: 1px 0 0 1px; }
.dtable { table-layout: fixed; border-collapse: separate; border-spacing: 0; width: 656px; line-height: 16px; }
.dtable th, .dtable td { height: 19px; padding: 0 1px; border: solid #c0c0c0; border-width: 0 1px 1px 0; font-weight: 400; white-space: nowrap; }
.dtable th { background: linear-gradient(#fcfcfc, #ececec); text-align: center; padding: 0; }
.dtable .r1 td { height: 39px; }
.dtable td svg { display: inline-block; vertical-align: middle; margin: 0 1px 0 3px; }
.c0 { width: 21px; } .c1 { width: 81px; } .c2 { width: 65px; } .c3 { width: 206px; } .c4 { width: 101px; }
.dtable .hot { background: linear-gradient(#f8d890, #f0bc5c); color: #600040; }
.dtable .hotnum { background: #ffd48a; color: #600040; }
.dtable .shape { background: #e0f0ff; border: 1px dotted #000; padding: 0 4px 0 8px; }
.shape div { display: flex; align-items: center; gap: 5px; padding-top: 5px; }
.shape span { flex: 1; height: 18px; border: solid #000; border-width: 0 0 2px 2px; text-align: center; color: #f00; line-height: 4px; padding-right: 16px; }
.dfoot { height: 34px; display: flex; padding: 3px 13px 8px 17px; gap: 15px; }
.dfoot button { width: 73px; justify-content: center; background: #e1e1e1; border: 1px solid #adadad; }
.dfoot button:nth-child(2) { margin-left: 8px; }
.dfoot .push { margin-left: auto; }

.sogou { position: absolute; left: 989px; top: 3px; width: 185px; height: 23px; display: flex; align-items: center; gap: 6px; background: linear-gradient(90deg, transparent 12px, #fff 12px); border-right: 1px solid #b8c8e0; border-bottom: 1px solid #b8c8e0; }
.sogou strong { color: #1a74c8; font-size: 14px; }
.net { position: absolute; left: 1000px; top: 61px; width: 126px; height: 40px; border: 1px solid #aaa; border-radius: 20px; background: linear-gradient(#f2f2f2, #d0d0d0); box-shadow: 0 3px 6px rgba(0,0,0,.4); display: flex; align-items: center; padding-right: 4px; gap: 4px; }
.ball { width: 46px; height: 46px; margin-left: -1px; border: 2px solid #fff; outline: 1px solid #888; border-radius: 50%; background: radial-gradient(ellipse at 50% 15%, #88c0a0 0, transparent 25%), linear-gradient(#127848 36%, #48cc58 36%, #3cc450); color: #fff; font: 14px/38px "Liberation Sans", sans-serif; text-align: center; flex: none; }
.rates { flex: 1; }
.rates p { display: flex; justify-content: space-between; font-size: 10px; line-height: 15px; }
.rates em { font: bold 12px/15px "DejaVu Sans", sans-serif; }
.u { color: #e85030; } .d { color: #18a050; }
.marks { position: absolute; left: 0; top: 0; pointer-events: none; }
.remark { position: absolute; left: 701px; top: 320px; color: #f00; font: 500 22px/28px "Noto Sans CJK SC", sans-serif; }
```
